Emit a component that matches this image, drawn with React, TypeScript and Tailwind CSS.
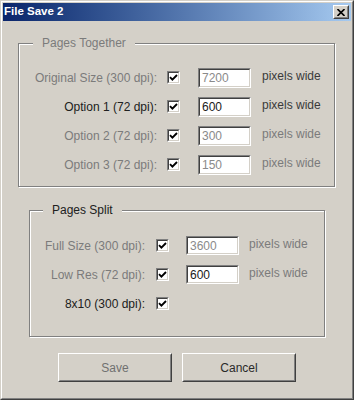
const font = { fontFamily: '"Liberation Sans", Arial, sans-serif' };

function Check() {
  return (
    <div className="w-[13px] h-[13px] shrink-0 border border-t-[#808080] border-l-[#808080] border-b-white border-r-white">
      <div className="w-full h-full border border-t-[#404040] border-l-[#404040] border-b-[#d4d0c8] border-r-[#d4d0c8] bg-white flex items-center justify-center">
        <svg width="9" height="9" viewBox="0 0 9 9">
          <path d="M1 4.2 L3.4 6.6 L8 2" stroke="#000" strokeWidth="1.9" fill="none" />
        </svg>
      </div>
    </div>
  );
}

function Field({ value, dim, h }: { value: string; dim?: boolean; h: string }) {
  return (
    <div className={`w-[53px] ${h} shrink-0 border border-t-[#808080] border-l-[#808080] border-b-white border-r-white`}>
      <div
        className={`w-full h-full border border-t-[#404040] border-l-[#404040] border-b-[#d4d0c8] border-r-[#d4d0c8] bg-white flex items-center pl-[2px] text-[12px] ${
          dim ? "text-[#8a8a8a]" : "text-[#1a1a1a]"
        }`}
      >
        {value}
      </div>
    </div>
  );
}

type RowProps = {
  label: string;
  labelDim?: boolean;
  value?: string;
  valueDim?: boolean;
  textDim?: boolean;
  split?: boolean;
};

function Row({ label, labelDim, value, valueDim, textDim, split }: RowProps) {
  return (
    <div className="h-[29px] flex items-center text-[12px]">
      <div
        className={`${split ? "w-[115px]" : "w-[138px]"} text-right whitespace-nowrap ${
          labelDim ? "text-[#7b7b7b]" : "text-[#202020]"
        }`}
      >
        {label}
      </div>
      <div className={split ? "ml-[11px]" : "ml-[10px]"}>
        <Check />
      </div>
      {value && (
        <>
          <div className={split ? "ml-[17px]" : "ml-[18px]"}>
            <Field value={value} dim={valueDim} h={split ? "h-[19px]" : "h-[20px]"} />
          </div>
          <div
            className={`${split ? "ml-[10px]" : "ml-[11px]"} -mt-[3px] whitespace-nowrap ${
              textDim ? "text-[#7b7b7b]" : "text-[#3a3a3a]"
            }`}
          >
            pixels wide
          </div>
        </>
      )}
    </div>
  );
}

function Group({
  title,
  dim,
  className,
  children,
  legendLeft,
}: {
  title: string;
  dim?: boolean;
  className: string;
  children: React.ReactNode;
  legendLeft: string;
}) {
  return (
    <div
      className={`relative border border-[#808080] shadow-[1px_1px_0_#fff,inset_1px_1px_0_#fff] ${className}`}
    >
      <span
        className={`absolute -top-[8px] ${legendLeft} px-[9px] bg-[#d4d0c8] text-[12px] leading-[14px] ${
          dim ? "text-[#7b7b7b]" : "text-[#202020]"
        }`}
      >
        {title}
      </span>
      {children}
    </div>
  );
}

function Button({ label, dim }: { label: string; dim?: boolean }) {
  return (
    <div className="w-[114px] h-[29px] border border-t-white border-l-white border-b-[#404040] border-r-[#404040]">
      <div
        className={`w-full h-full border border-t-[#d4d0c8] border-l-[#d4d0c8] border-b-[#808080] border-r-[#808080] flex items-center justify-center text-[12px] ${
          dim ? "text-[#707070]" : "text-[#2a2a2a]"
        }`}
      >
        {label}
      </div>
    </div>
  );
}

export default function App() {
  return (
    <div style={font} className="w-[354px] h-[400px] bg-[#d4d0c8] border border-t-[#d4d0c8] border-l-[#d4d0c8] border-b-[#404040] border-r-[#404040]">
      <div className="w-full h-full border border-t-white border-l-white border-b-[#808080] border-r-[#808080] p-[1px] flex flex-col">
        {/* Title bar */}
        <div className="h-[18px] shrink-0 bg-linear-to-r from-[#0a246a] to-[#a6caf0] flex items-center justify-between pl-[1px] pr-[2px]">
          <span className="text-white font-bold text-[11.5px] leading-none">File Save 2</span>
          <div className="w-[16px] h-[14px] border border-t-white border-l-white border-b-[#404040] border-r-[#404040]">
            <div className="w-full h-full bg-[#d4d0c8] border border-t-[#d4d0c8] border-l-[#d4d0c8] border-b-[#808080] border-r-[#808080] flex items-center justify-center">
              <svg width="8" height="7" viewBox="0 0 8 7">
                <path d="M0.5 0 L7.5 7 M7.5 0 L0.5 7" stroke="#000" strokeWidth="1.6" />
              </svg>
            </div>
          </div>
        </div>

        {/* Pages Together */}
        <Group title="Pages Together" dim className="mt-[22px] ml-[15px] w-[317px] h-[144px] pt-[19px]" legendLeft="left-[14px]">
          <Row label="Original Size (300 dpi):" labelDim value="7200" valueDim />
          <Row label="Option 1 (72 dpi):" value="600" />
          <Row label="Option 2 (72 dpi):" labelDim value="300" valueDim textDim />
          <Row label="Option 3 (72 dpi):" labelDim value="150" valueDim textDim />
        </Group>

        {/* Pages Split */}
        <Group title="Pages Split" className="mt-[23px] ml-[26px] w-[296px] h-[127px] pt-[20px]" legendLeft="left-[13px]">
          <Row split label="Full Size (300 dpi):" labelDim value="3600" valueDim textDim />
          <Row split label="Low Res (72 dpi):" labelDim value="600" textDim />
          <Row split label="8x10 (300 dpi):" />
        </Group>

        <div className="mt-[16px] ml-[55px] flex gap-[10px]">
          <Button label="Save" dim />
          <Button label="Cancel" />
        </div>
      </div>
    </div>
  );
}
